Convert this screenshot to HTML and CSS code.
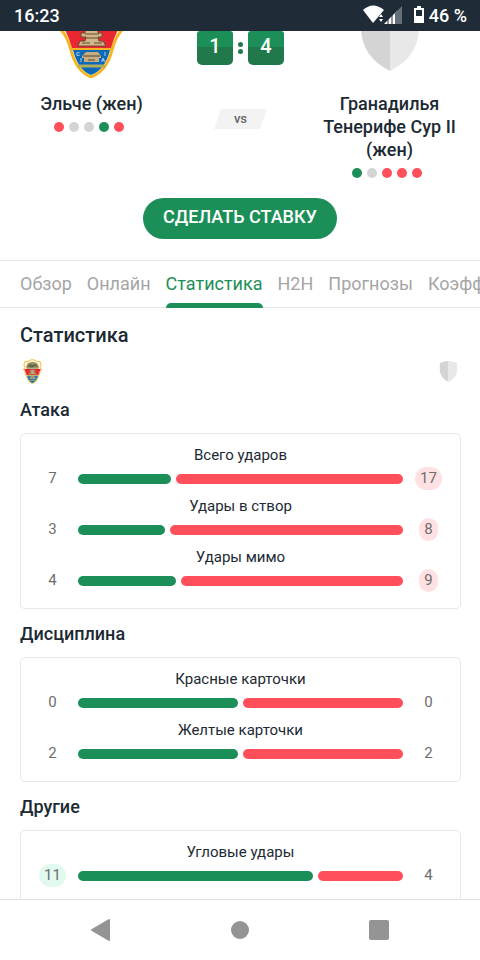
FILE: index.html
```
<!DOCTYPE html>
<html lang="ru">

<head>
    <meta charset="utf-8">
    <meta name="viewport" content="width=device-width, initial-scale=1">
    <title>Эльче (жен) - Гранадилья Тенерифе Сур II (жен)</title>
    <link rel="stylesheet" href="styles.css">
</head>

<body>

    <!-- shared emblems -->
    <svg class="defs" aria-hidden="true">
        <symbol id="crest" viewBox="0 0 63 83">
            <path d="M31 2 L40 4 L46 8 L57 9 L60 19 L57 29 L62 35 Q56 41 52 55 Q47 76 31 82 Q16 76 11 55 Q7 41 1 35 L6 29 L3 19 L6 9 L17 8 L23 4Z" fill="#fff8dc" stroke="#f7b526" stroke-width="3" />
            <path d="M16 14 Q31 4 47 14 L52 24 V32 H11 V24Z" fill="#a3936a" />
            <path d="M14 25 L24 15 L31 20 L41 16 L49 26 L39 24 L30 29Z" fill="#5c6b48" />
            <path d="M4 33 H59 Q54 42 51 53 H12 Q9 42 4 33Z" fill="#ea2631" />
            <path d="M25 35 H38 V38 H42 V42 H38 L39 46 H43 L46 51 H18 L20 46 H25 L26 42 H21 V38 H25Z" fill="#d2b78a" stroke="#6b4a35" stroke-width="1" />
            <path d="M25 39 H39 M26 43 H38 M22 48 H30 M34 48 H42" stroke="#6b4a35" stroke-width="1" />
            <path d="M13 55 H50 Q45 75 31 80 Q18 75 13 55Z" fill="#0b69b7" />
            <path d="M11 54 H52" stroke="#f7b526" stroke-width="2" />
            <path d="M26 57 H38 L41 61 V63 H39 V67 H24 V63 H22 V61Z" fill="#c8ad80" />
            <path d="M23 61 H40 M28 65 H35" stroke="#54422e" stroke-width="1" />
            <path d="M18 71 H45" stroke="#b0ae5e" stroke-width="3" />
            <g fill="#b5d3ec" font-size="6" font-weight="700" text-anchor="middle">
                <text x="18" y="61">C</text>
                <text x="21" y="67">I</text>
                <text x="45" y="61">I</text>
                <text x="43" y="67">A</text>
            </g>
        </symbol>
        <symbol id="shield" viewBox="0 0 58 68">
            <path d="M29 0 Q14 0 3 6 Q0 8 0 14 V26 Q1 54 29 68Z" fill="#d4d4d4" />
            <path d="M29 0 Q44 0 55 6 Q58 8 58 14 V26 Q57 54 29 68Z" fill="#e8e8e8" />
        </symbol>
    </svg>

    <div class="container">

        <div class="statusBar">
            <span>16:23</span>
            <div class="statusRight">
                <svg class="signal" width="40" height="22" viewBox="0 0 40 22" aria-hidden="true">
                    <path d="M0 5 Q10 -4 21 5 L10 18Z" fill="#fff" />
                    <path d="M16 12 L18 9 L20 12Z M16 14 H20 L18 17Z" fill="#fff" />
                    <path d="M21 19 L34 6 V19Z" fill="#fff" />
                    <path d="M25 13 V19 M29 9 V19" stroke="#1f2c37" stroke-width="1" />
                    <path d="M32 8 L39 1 V19 H32Z" fill="#63707a" />
                </svg>
                <svg class="battery" width="10" height="21" viewBox="0 0 10 21" aria-hidden="true">
                    <path d="M3 0 H7 V2 H10 V17 H0 V2 H3Z M2 4 V10 H8 V4Z" fill="#fff" fill-rule="evenodd" />
                </svg>
                <span>46 %</span>
            </div>
        </div>

        <main class="content">

            <div class="match">
                <div class="team">
                    <svg class="teamLogo" viewBox="0 36 63 47" role="img" aria-label="Эльче">
                        <use href="#crest" width="63" height="83" />
                    </svg>
                    <div class="teamName">Эльче (жен)</div>
                    <div class="form">
                        <i class="dot lose"></i><i class="dot draw"></i><i class="dot draw"></i><i class="dot win"></i><i class="dot lose"></i>
                    </div>
                </div>
                <div class="score">
                    <div class="scoreBoard">
                        <span class="scoreNum">1</span>
                        <span class="colon"><i></i><i></i></span>
                        <span class="scoreNum">4</span>
                    </div>
                    <div class="vs">vs</div>
                </div>
                <div class="team">
                    <svg class="teamLogo" viewBox="-3 28 63 47" role="img" aria-label="Гранадилья">
                        <use href="#shield" width="58" height="68" />
                    </svg>
                    <div class="teamName">Гранадилья Тенерифе Сур II (жен)</div>
                    <div class="form">
                        <i class="dot win"></i><i class="dot draw"></i><i class="dot lose"></i><i class="dot lose"></i><i class="dot lose"></i>
                    </div>
                </div>
            </div>

            <button class="betButton" type="button">СДЕЛАТЬ СТАВКУ</button>

            <nav class="tabs">
                <a href="#overview">Обзор</a>
                <a href="#online">Онлайн</a>
                <a href="#stats" class="active">Статистика</a>
                <a href="#h2h">H2H</a>
                <a href="#tips">Прогнозы</a>
                <a href="#odds">Коэффициенты</a>
            </nav>

            <div class="stats" id="stats">
                <h1>Статистика</h1>
                <div class="statsLogos">
                    <svg width="25" height="25" viewBox="0 0 63 83" aria-hidden="true"><use href="#crest" width="63" height="83" /></svg>
                    <svg width="25" height="21" viewBox="0 0 58 68" aria-hidden="true"><use href="#shield" width="58" height="68" /></svg>
                </div>

                <h2>Атака</h2>
                <div class="card">
                    <div class="statRow">
                        <div class="statName">Всего ударов</div>
                        <span class="num">7</span>
                        <div class="bars"><div class="bar home" style="flex-grow: 7"></div><div class="bar away" style="flex-grow: 17"></div></div>
                        <span class="num best away">17</span>
                    </div>
                    <div class="statRow">
                        <div class="statName">Удары в створ</div>
                        <span class="num">3</span>
                        <div class="bars"><div class="bar home" style="flex-grow: 3"></div><div class="bar away" style="flex-grow: 8"></div></div>
                        <span class="num best away">8</span>
                    </div>
                    <div class="statRow">
                        <div class="statName">Удары мимо</div>
                        <span class="num">4</span>
                        <div class="bars"><div class="bar home" style="flex-grow: 4"></div><div class="bar away" style="flex-grow: 9"></div></div>
                        <span class="num best away">9</span>
                    </div>
                </div>

                <h2>Дисциплина</h2>
                <div class="card">
                    <div class="statRow">
                        <div class="statName">Красные карточки</div>
                        <span class="num">0</span>
                        <div class="bars"><div class="bar home" style="flex-grow: 1"></div><div class="bar away" style="flex-grow: 1"></div></div>
                        <span class="num">0</span>
                    </div>
                    <div class="statRow">
                        <div class="statName">Желтые карточки</div>
                        <span class="num">2</span>
                        <div class="bars"><div class="bar home" style="flex-grow: 2"></div><div class="bar away" style="flex-grow: 2"></div></div>
                        <span class="num">2</span>
                    </div>
                </div>

                <h2>Другие</h2>
                <div class="card">
                    <div class="statRow">
                        <div class="statName">Угловые удары</div>
                        <span class="num best home">11</span>
                        <div class="bars"><div class="bar home" style="flex-grow: 11"></div><div class="bar away" style="flex-grow: 4"></div></div>
                        <span class="num">4</span>
                    </div>
                </div>
            </div>
        </main>

        <div class="navBar">
            <button type="button" aria-label="Назад">
                <svg width="20" height="22" viewBox="0 0 20 22"><path d="M18 1 V21 L1 11Z" fill="#949494" stroke="#949494" stroke-width="2" stroke-linejoin="round" /></svg>
            </button>
            <button type="button" aria-label="Домой">
                <svg width="20" height="20" viewBox="0 0 20 20"><circle cx="10" cy="10" r="9" fill="#949494" /></svg>
            </button>
            <button type="button" aria-label="Недавние">
                <svg width="20" height="20" viewBox="0 0 20 20"><rect width="20" height="20" rx="2" fill="#949494" /></svg>
            </button>
        </div>

    </div>

</body>

</html>
```

FILE: styles.css
```
* {
    box-sizing: border-box;
}

body {
    margin: 0;
    font-family: Roboto, "Noto Sans", sans-serif;
    color: #1c2a34;
    background-color: #fff;
}

.defs {
    display: none;
}

.container {
    display: flex;
    flex-direction: column;
    height: 100vh;
}

/* status bar */
.statusBar {
    display: flex;
    justify-content: space-between;
    align-items: center;
    flex: none;
    padding: 5px 13px 4px 14px;
    color: #fff;
    background-color: #1f2c37;
    font-size: 18px;
    font-weight: 500;
    line-height: 22px;
}

.statusRight {
    display: flex;
    align-items: center;
}

.signal {
    margin-right: 11px;
}

.battery {
    margin-right: 5px;
}

.content {
    flex: 1;
    min-height: 0;
    overflow: hidden;
}

/* match header */
.match {
    display: grid;
    grid-template-columns: 1fr 155px 1fr;
    padding: 0 19px 0 20px;
}

.team {
    display: flex;
    flex-direction: column;
    align-items: center;
}

.teamLogo {
    width: 63px;
    height: 47px;
}

.teamName {
    margin-top: 14px;
    font-size: 18px;
    font-weight: 500;
    line-height: 23px;
    text-align: center;
}

.form {
    display: flex;
    margin-top: 7px;
}

.dot {
    width: 10px;
    height: 10px;
    margin-right: 5px;
    border-radius: 50%;
}

.win {
    background-color: #1c8f59;
}

.draw {
    background-color: #d4d4d4;
}

.lose {
    background-color: #ff4f5b;
}

.score {
    display: flex;
    flex-direction: column;
    align-items: center;
}

.scoreBoard {
    display: flex;
    align-items: center;
    gap: 5px;
}

.scoreNum {
    width: 36px;
    height: 34px;
    border-radius: 3px 3px 5px 5px;
    color: #fff;
    background: linear-gradient(#1c8f59 16px, #21784a 16px);
    font-size: 20px;
    font-weight: 500;
    line-height: 31px;
    text-align: center;
}

.colon {
    display: flex;
    flex-direction: column;
    gap: 2px;
}

.colon i {
    width: 5px;
    height: 5px;
    border-radius: 50%;
    background-color: #21784a;
}

.vs {
    width: 53px;
    margin-top: 44px;
    color: #666;
    background-color: #f3f3f3;
    clip-path: polygon(7px 0, 100% 0, 46px 100%, 0 100%);
    font-size: 13px;
    font-weight: 500;
    line-height: 20px;
    text-align: center;
}

.betButton {
    display: block;
    margin: 20px auto 21px;
    padding: 0 20px 4px;
    border: 0;
    border-radius: 21px;
    color: #fff;
    background-color: #1c8f59;
    font: 500 18px/37px Roboto, "Noto Sans", sans-serif;
}

/* tabs */
.tabs {
    display: flex;
    gap: 15px;
    padding-left: 20px;
    border-top: 1px solid #e5e5e5;
    box-shadow: inset 0 -1px #e5e5e5;
    overflow: hidden;
}

.tabs a {
    padding-top: 4px;
    color: #a5a5a5;
    font-size: 18px;
    line-height: 38px;
    text-decoration: none;
}

.tabs a.active {
    color: #1c8f59;
}

.tabs a.active::after {
    content: "";
    display: block;
    height: 5px;
    border-radius: 5px 5px 0 0;
    background-color: #1c8f59;
}

/* statistics */
.stats {
    padding: 15px 19px 0 20px;
}

h1 {
    margin: 0;
    font-size: 20px;
    font-weight: 500;
    line-height: 24px;
}

.statsLogos {
    display: flex;
    justify-content: space-between;
    align-items: center;
    height: 25px;
    margin: 12px 0 14px;
}

h2 {
    margin: 13px 0 11px;
    font-size: 18px;
    font-weight: 500;
    line-height: 24px;
}

.card {
    display: flex;
    flex-direction: column;
    gap: 5px;
    padding: 10px 6px 16px;
    border: 1px solid #e5e7e8;
    border-radius: 5px;
}

.statRow {
    display: grid;
    grid-template-columns: 51px 1fr 51px;
    grid-template-rows: 22px 24px;
    align-items: center;
    justify-items: center;
}

.statName {
    grid-column: 1 / 4;
    font-size: 15px;
}

.num {
    padding: 0 5px;
    color: #6e6e6e;
    font-size: 15px;
    line-height: 23px;
}

.num.best {
    border-radius: 12px;
}

.num.best.home {
    background-color: #e1f9ef;
}

.num.best.away {
    background-color: #ffe1e3;
}

.bars {
    display: flex;
    gap: 5px;
    width: 100%;
    padding-top: 2px;
}

.bar {
    flex: 1 1 0;
    height: 10px;
    border-radius: 5px;
}

.bar.home {
    background-color: #1c8f59;
}

.bar.away {
    background-color: #ff4f5b;
}

/* bottom navigation */
.navBar {
    display: flex;
    flex: none;
    padding: 0 32px;
    border-top: 1px solid #e0e0e0;
    background-color: #fff;
}

.navBar button {
    display: flex;
    flex: 1;
    justify-content: center;
    align-items: center;
    height: 60px;
    padding: 0;
    border: 0;
    background: none;
}
```
